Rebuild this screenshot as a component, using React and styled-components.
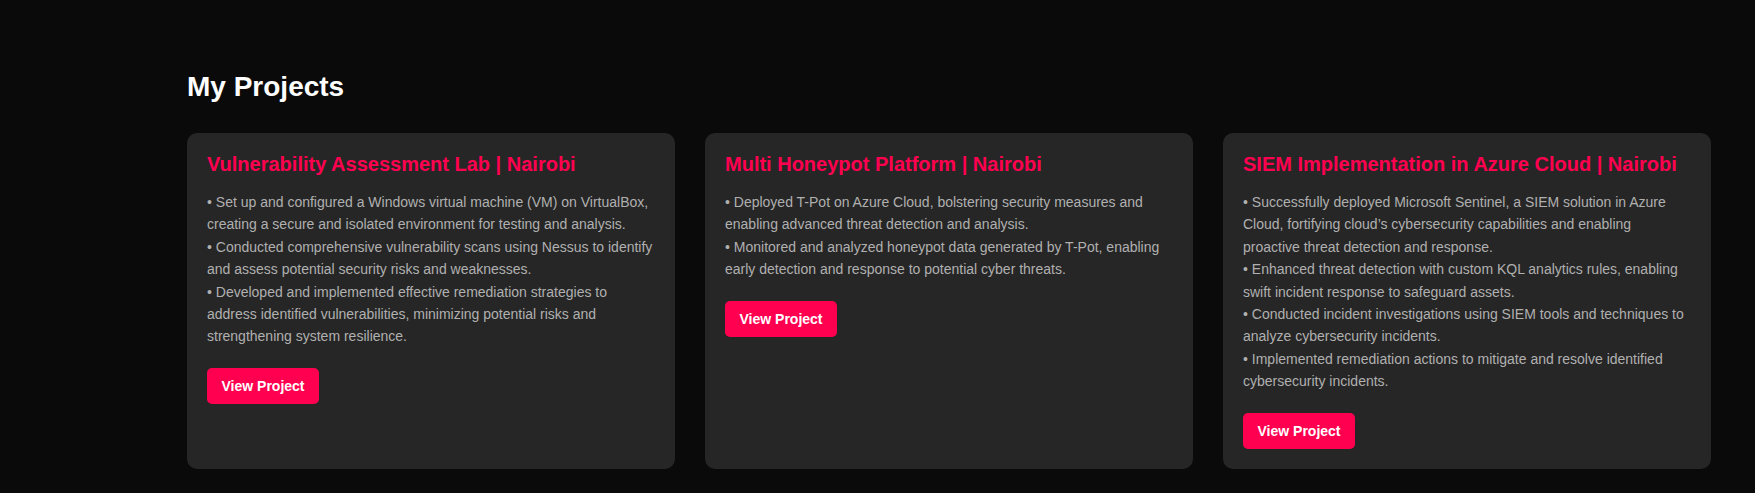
import React from "react";
import styled, { createGlobalStyle } from "styled-components";

const GlobalStyle = createGlobalStyle`
  html, body {
    margin: 0;
    padding: 0;
    background: #0a0a0a;
    font-family: "Liberation Sans", Arial, sans-serif;
  }
`;

const Section = styled.section`
  background: #0a0a0a;
  padding: 71px 44px 25px 187px;
  min-height: 493px;
  box-sizing: border-box;
`;

const Heading = styled.h2`
  margin: 0 0 30px;
  color: #ffffff;
  font-size: 28px;
  font-weight: 700;
  line-height: normal;
`;

const Grid = styled.div`
  display: grid;
  grid-template-columns: repeat(3, 1fr);
  gap: 30px;
`;

const Card = styled.article`
  background: #262626;
  border-radius: 10px;
  padding: 20px;
  display: flex;
  flex-direction: column;
  align-items: flex-start;
`;

const Title = styled.h3`
  margin: 0 0 15px;
  color: #ff0050;
  font-size: 20px;
  font-weight: 700;
  line-height: normal;
`;

const Body = styled.p`
  margin: 0 0 20px;
  color: #b0b0b0;
  font-size: 14px;
  line-height: 1.6;
`;

const Button = styled.a`
  display: inline-flex;
  align-items: center;
  justify-content: center;
  height: 36px;
  padding: 0 14.5px;
  box-sizing: border-box;
  background: #ff0050;
  color: #ffffff;
  font-size: 14px;
  font-weight: 700;
  border-radius: 5px;
  text-decoration: none;
  cursor: pointer;
`;

const projects = [
  {
    title: "Vulnerability Assessment Lab | Nairobi",
    points: [
      "Set up and configured a Windows virtual machine (VM) on VirtualBox, creating a secure and isolated environment for testing and analysis.",
      "Conducted comprehensive vulnerability scans using Nessus to identify and assess potential security risks and weaknesses.",
      "Developed and implemented effective remediation strategies to address identified vulnerabilities, minimizing potential risks and strengthening system resilience.",
    ],
  },
  {
    title: "Multi Honeypot Platform | Nairobi",
    points: [
      "Deployed T-Pot on Azure Cloud, bolstering security measures and enabling advanced threat detection and analysis.",
      "Monitored and analyzed honeypot data generated by T-Pot, enabling early detection and response to potential cyber threats.",
    ],
  },
  {
    title: "SIEM Implementation in Azure Cloud | Nairobi",
    points: [
      "Successfully deployed Microsoft Sentinel, a SIEM solution in Azure Cloud, fortifying cloud\u2019s cybersecurity capabilities and enabling proactive threat detection and response.",
      "Enhanced threat detection with custom KQL analytics rules, enabling swift incident response to safeguard assets.",
      "Conducted incident investigations using SIEM tools and techniques to analyze cybersecurity incidents.",
      "Implemented remediation actions to mitigate and resolve identified cybersecurity incidents.",
    ],
  },
];

export default function App() {
  return (
    <>
      <GlobalStyle />
      <Section>
        <Heading>My Projects</Heading>
        <Grid>
          {projects.map((p) => (
            <Card key={p.title}>
              <Title>{p.title}</Title>
              <Body>
                {p.points.map((pt, i) => (
                  <React.Fragment key={i}>
                    {i > 0 && <br />}
                    {"\u2022 " + pt}
                  </React.Fragment>
                ))}
              </Body>
              <Button href="#">View Project</Button>
            </Card>
          ))}
        </Grid>
      </Section>
    </>
  );
}
